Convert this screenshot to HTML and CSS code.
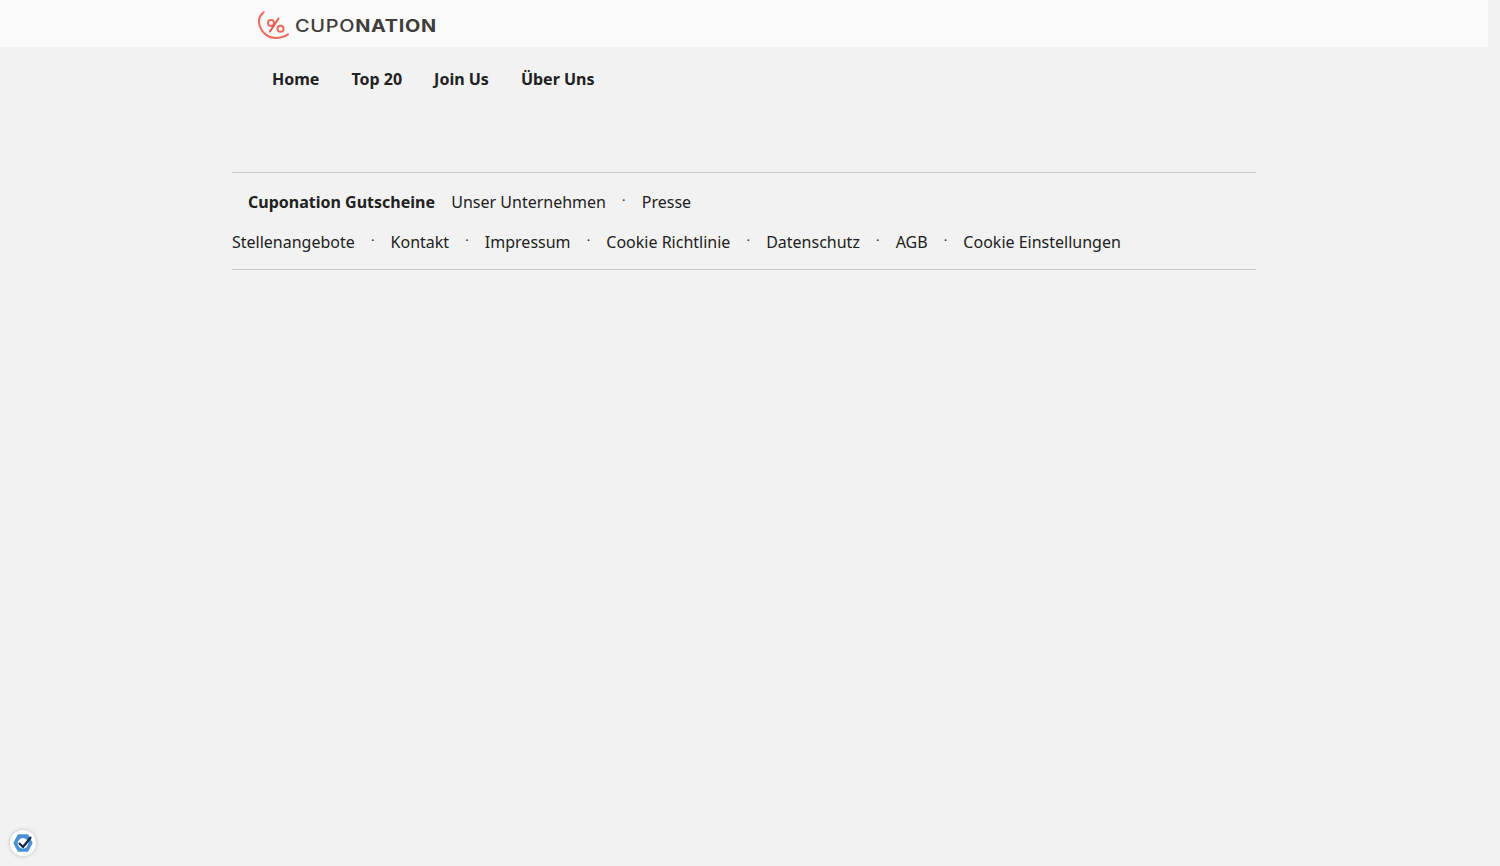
FILE: index.html
```html
<!DOCTYPE html>
<html lang="de">
<head>
<meta charset="utf-8">
<title>Cuponation</title>
<link rel="stylesheet" href="styles.css">
</head>
<body>
<header class="topbar">
  <a class="logo" href="#">
    <svg class="logo-mark" width="32" height="28" viewBox="0 0 32 28" fill="none" stroke="#ee6a60">
      <path d="M5.7 1.2 C1.6 4.6 0 10 1.9 15.4 C4.4 22.6 10.6 27 17.4 27 C22.6 27 26.8 25.6 30 23.4" stroke-width="2" stroke-linecap="round"/>
      <circle cx="13" cy="12" r="3" stroke-width="2"/>
      <circle cx="22.5" cy="17.8" r="3" stroke-width="2"/>
      <path d="M20.5 7.5 L12 20.5" stroke="#e0584f" stroke-width="2" stroke-linecap="round"/>
    </svg>
    <span class="logo-text">CUPO<b>NATION</b></span>
  </a>
</header>
<nav class="mainnav">
  <a href="#">Home</a>
  <a href="#">Top 20</a>
  <a href="#">Join Us</a>
  <a href="#">Über Uns</a>
</nav>
<footer class="foot">
  <div class="foot-row foot-row-first">
    <strong class="foot-title">Cuponation Gutscheine</strong>
    <a href="#">Unser Unternehmen</a><span class="sep">·</span>
    <a href="#">Presse</a>
  </div>
  <div class="foot-row">
    <a href="#">Stellenangebote</a><span class="sep">·</span>
    <a href="#">Kontakt</a><span class="sep">·</span>
    <a href="#">Impressum</a><span class="sep">·</span>
    <a href="#">Cookie Richtlinie</a><span class="sep">·</span>
    <a href="#">Datenschutz</a><span class="sep">·</span>
    <a href="#">AGB</a><span class="sep">·</span>
    <a href="#">Cookie Einstellungen</a>
  </div>
</footer>
<div class="consent-badge">
  <svg width="20" height="20" viewBox="0 0 22 22">
    <path d="M6 2.5 H16 L20.5 11 L16 19.5 H6 L1.5 11 Z" fill="#4a90d6" stroke="#4a90d6" stroke-width="2" stroke-linejoin="round"/>
    <circle cx="11" cy="11.4" r="5.8" fill="#fff"/>
    <path d="M6.6 11 L11 15.4 L19.8 4.4" fill="none" stroke="#12294d" stroke-width="2.5"/>
  </svg>
</div>
</body>
</html>
```

FILE: styles.css
```css
* {
  box-sizing: border-box;
}

html,
body {
  height: 100%;
}

body {
  margin: 0;
  background: #f2f2f2;
  color: #212121;
  font-family: "Noto Sans", sans-serif;
  font-size: 16px;
  overflow: hidden;
}

a {
  color: inherit;
  text-decoration: none;
}

.topbar {
  display: flex;
  align-items: center;
  width: 1488px;
  height: 47px;
  padding-left: 258px;
  background: #fafafa;
}

.logo {
  display: flex;
  align-items: center;
  gap: 5px;
  margin-top: 3px;
}

.logo-mark {
  display: block;
  margin-top: -1px;
}

.logo-text {
  padding-top: 1px;
  color: #3f3d3a;
  font-family: "Inter", sans-serif;
  font-size: 17px;
  font-weight: 500;
  letter-spacing: 0.6px;
  line-height: 20px;
  transform: scaleX(1.17);
  transform-origin: left center;
}

.logo-text b {
  font-weight: 700;
}

.mainnav {
  display: flex;
  gap: 32px;
  height: 64px;
  padding: 20px 0 0 272px;
  font-weight: 700;
  line-height: 24px;
}

.foot {
  width: 1024px;
  height: 98px;
  margin: 61px 0 0 232px;
  padding-top: 9px;
  border-top: 1px solid #c9c9c9;
  border-bottom: 1px solid #c9c9c9;
}

.foot-row {
  display: flex;
  height: 40px;
  align-items: center;
  line-height: 24px;
}

.foot-row-first {
  padding-left: 16px;
}

.foot-title {
  margin-right: 16.3px;
  font-weight: 700;
}

.sep {
  width: 35.75px;
  text-align: center;
  font-size: 13px;
  transform: translateY(-2px);
}

.consent-badge {
  position: fixed;
  left: 10px;
  bottom: 10px;
  display: flex;
  align-items: center;
  justify-content: center;
  width: 26px;
  height: 26px;
  border-radius: 50%;
  background: #fff;
  box-shadow: 0 0 4px rgba(0, 0, 0, 0.22);
}
```
